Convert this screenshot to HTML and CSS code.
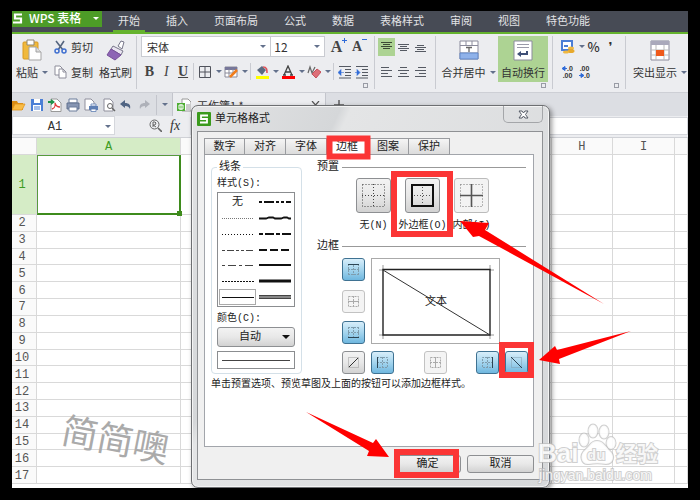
FILE: index.html
```html
<!DOCTYPE html>
<html lang="zh-CN">
<head>
<meta charset="utf-8">
<title>WPS 表格</title>
<link rel="stylesheet" href="styles.css">
</head>
<body>
<div class="app">
  <header class="menu">
    <button class="brand"><svg width="10" height="11" viewBox="0 0 10 11"><path d="M9 1.5H2v4h6v4H0" fill="none" stroke="#fff" stroke-width="2.2"/></svg><span>WPS 表格</span><i class="caret light"></i></button>
    <nav class="menu-tabs">
      <a href="#" class="current">开始</a><a href="#">插入</a><a href="#">页面布局</a><a href="#">公式</a><a href="#">数据</a><a href="#">表格样式</a><a href="#">审阅</a><a href="#">视图</a><a href="#">特色功能</a>
    </nav>
  </header>

  <div class="ribbon">
    <div class="group clipboard">
      <button class="big"><svg width="20" height="22" viewBox="0 0 20 22"><rect x="1" y="3" width="15" height="17" rx="1" fill="#f0b93d" stroke="#d99a20"/><path d="M5 1h7v5H5z" fill="#fff" stroke="#8d8574"/><path d="M7 8h7l5 5v8H7z" fill="#fff" stroke="#a3a3a3"/><path d="M14 8v5h5" fill="#ddd" stroke="#a3a3a3"/></svg><span>粘贴<i class="caret"></i></span></button>
      <div class="stack">
        <button class="line"><svg width="13" height="14" viewBox="0 0 13 14"><path d="M2 1l7 9M10 1L4 10" stroke="#55657f" stroke-width="1.6"/><circle cx="3" cy="11" r="2" fill="none" stroke="#3f6fd0" stroke-width="1.5"/><circle cx="10" cy="11" r="2" fill="none" stroke="#3f6fd0" stroke-width="1.5"/></svg>剪切</button>
        <button class="line"><svg width="13" height="14" viewBox="0 0 13 14"><path d="M1 1h5l2 2v7H1z" fill="#fff" stroke="#8d8d9a"/><path d="M5 4h4l3 3v6H5z" fill="#fff" stroke="#8d8d9a"/><path d="M9 4v3h3" fill="none" stroke="#8d8d9a"/></svg>复制</button>
      </div>
      <button class="big"><svg width="20" height="22" viewBox="0 0 20 22"><path d="M12 7l3-5 3 1-2 7z" fill="#fff" stroke="#77778a"/><path d="M7 7l10 5-2 4L5 10z" fill="#e9e4f1" stroke="#77778a"/><path d="M5 10l10 6-6 5-8-5z" fill="#8d65b5" stroke="#775099"/></svg><span>格式刷</span></button>
    </div>

    <div class="group fonts">
      <div class="row">
        <div class="field face"><select aria-label="字体"><option>宋体</option></select><i class="caret"></i></div>
        <div class="field size"><select aria-label="字号"><option>12</option></select><i class="caret"></i></div>
        <button class="tool wide grow" aria-label="增大字号">A<svg width="5" height="5" viewBox="0 0 5 5"><path d="M0 2.5h5M2.5 0v5" stroke="#2f6bd8"/></svg></button>
        <button class="tool wide shrink" aria-label="减小字号">A<svg width="5" height="5" viewBox="0 0 5 5"><path d="M0 1.5h5" stroke="#2f6bd8"/></svg></button>
      </div>
      <div class="row">
        <button class="tool letter"><b>B</b></button><button class="tool letter"><em>I</em></button><button class="tool letter"><u>U</u></button>
        <i class="split"></i>
        <button class="tool drop" aria-label="边框"><svg width="14" height="14" viewBox="0 0 14 14"><path d="M1.500 1.500h11v11h-11zM7 1v12M1 7h12" fill="none" stroke="#50535c"/></svg><i class="caret"></i></button>
        <button class="tool drop" aria-label="绘图边框"><svg width="14" height="14" viewBox="0 0 14 14"><path d="M1 2h12v10H1z" fill="#fff" stroke="#8a8a99"/><path d="M1 2h12v3H1z" fill="#77779a"/><path d="M1 8h8M5 4v8M9 4v4" stroke="#8a8a99"/><path d="M6 12l7-7" stroke="#f17d1b" stroke-width="2.500"/></svg><i class="caret"></i></button>
        <i class="split"></i>
        <button class="tool drop" aria-label="填充颜色"><svg width="14" height="14" viewBox="0 0 14 14"><path d="M2 5l5-4 4 4-4 5z" fill="#5c6b80"/><path d="M8 2c4 0 4 3 4 6" fill="none" stroke="#e0555b" stroke-width="1.600"/><path d="M1 12.500h13" stroke="#ff0" stroke-width="3"/></svg><i class="caret"></i></button>
        <button class="tool drop" aria-label="字体颜色"><svg width="14" height="14" viewBox="0 0 14 14"><path d="M3 10l4-9 4 9M4.500 7h5M2 10h3M9 10h3" fill="none" stroke="#444" stroke-width="1.300"/><path d="M1 12.500h13" stroke="red" stroke-width="3"/></svg><i class="caret"></i></button>
        <button class="tool drop" aria-label="清除"><svg width="14" height="14" viewBox="0 0 14 14"><path d="M1 8l2-6 2 6 3-6" fill="none" stroke="#666" stroke-width="1.200"/><path d="M5 9l5-5 4 3-5 6z" fill="#dd6f78" stroke="#c5505b"/></svg><i class="caret"></i></button>
        <i class="split"></i>
        <button class="tool" aria-label="减少缩进"><svg width="13" height="14" viewBox="0 0 13 14"><path d="M1 1.500h12M7 4.500h6M7 7.500h6M7 10.500h6M1 13h12" stroke="#555a63"/><path d="M0 7.500l3-3v6zM3 7.500h3" fill="#2f6bd8" stroke="#2f6bd8" stroke-width=".6"/></svg></button>
        <button class="tool" aria-label="增加缩进"><svg width="13" height="14" viewBox="0 0 13 14"><path d="M1 1.500h12M7 4.500h6M7 7.500h6M7 10.500h6M1 13h12" stroke="#555a63"/><path d="M5 7.500l-3-3v6zM0 7.500h3" fill="#2f6bd8" stroke="#2f6bd8" stroke-width=".6"/></svg></button>
      </div>
      <i class="corner"></i>
    </div>

    <div class="group align">
      <div class="row">
        <button class="tool on" aria-label="顶端对齐"><svg width="11" height="12" viewBox="0 0 11 12"><path d="M0 1.500h11M2 3.500h7M0 5.500h11M2 7.500h7" stroke="#3c4a35"/></svg></button>
        <button class="tool" aria-label="垂直居中"><svg width="11" height="12" viewBox="0 0 11 12"><path d="M0 3.500h11M2 5.500h7M0 7.500h11M2 9.500h7" stroke="#555a63"/></svg></button>
        <button class="tool" aria-label="底端对齐"><svg width="11" height="12" viewBox="0 0 11 12"><path d="M2 4.500h7M0 6.500h11M2 8.500h7M0 10.500h11" stroke="#555a63"/></svg></button>
      </div>
      <div class="row">
        <button class="tool" aria-label="左对齐"><svg width="11" height="12" viewBox="0 0 11 12"><path d="M0 1.500h8M0 4.500h11M0 7.500h7M0 10.500h11" stroke="#555a63"/></svg></button>
        <button class="tool" aria-label="水平居中"><svg width="11" height="12" viewBox="0 0 11 12"><path d="M2 1.500h7M0 4.500h11M2 7.500h7M0 10.500h11" stroke="#555a63"/></svg></button>
        <button class="tool" aria-label="右对齐"><svg width="11" height="12" viewBox="0 0 11 12"><path d="M3 1.500h8M0 4.500h11M4 7.500h7M0 10.500h11" stroke="#555a63"/></svg></button>
      </div>
    </div>

    <div class="group merge">
      <button class="big mid"><svg width="20" height="22" viewBox="0 0 20 22"><path d="M1 2h18v18H1z" fill="#fff" stroke="#8b8b9c"/><path d="M1 6.500h18M7 2v4M13 2v4M1 14h18" stroke="#8b8b9c"/><path d="M1 14h18v6H1z" fill="#8fb2ea" stroke="#6389c9"/><path d="M7 8.500h6M10 8v5" stroke="#666" stroke-width="1.300"/></svg><span>合并居中<i class="caret"></i></span></button>
      <button class="big on"><svg width="20" height="22" viewBox="0 0 20 22"><path d="M1 2h18v19H1z" fill="#fff" stroke="#8b8b9c"/><path d="M4 5.500h12M4 8.500h12" stroke="#9a9aa8"/><path d="M14 12v3H7" fill="none" stroke="#3f4f77" stroke-width="2"/><path d="M4 15l4-3v6z" fill="#3f4f77"/></svg><span>自动换行</span></button>
      <i class="corner"></i>
    </div>

    <div class="group number">
      <div class="row">
        <button class="tool drop" aria-label="货币"><svg width="14" height="14" viewBox="0 0 14 14"><path d="M1 1h10v9H1z" fill="#fff" stroke="#4b7ed6" stroke-width="2"/><path d="M3 6h4" stroke="#4b7ed6" stroke-width="2"/><ellipse cx="10" cy="8" rx="3" ry="1.600" fill="#f0b840"/><ellipse cx="10" cy="11" rx="3.500" ry="2" fill="#e7a92c"/><ellipse cx="5" cy="12" rx="3" ry="1.600" fill="#f0b840"/></svg><i class="caret"></i></button>
        <button class="tool sign">%</button><button class="tool comma">❜</button>
      </div>
      <div class="row">
        <button class="tool places" aria-label="增加小数位数"><span><svg width="5" height="5" viewBox="0 0 5 5"><path d="M0 2.500l3-2v4zM2 2.500h3" fill="#2f6bd8" stroke="#2f6bd8"/></svg>.0</span><span>.00</span></button>
        <button class="tool places" aria-label="减少小数位数"><span>.00</span><span><svg width="5" height="5" viewBox="0 0 5 5"><path d="M5 2.500l-3-2v4zM0 2.500h3" fill="#2f6bd8" stroke="#2f6bd8"/></svg>.0</span></button>
      </div>
      <i class="corner"></i>
    </div>

    <div class="group show">
      <button class="big mid"><svg width="20" height="22" viewBox="0 0 20 22"><path d="M1 2h18v19H1z" fill="#fff" stroke="#8b8b9c"/><path d="M1 2h18v4H1z" fill="#aaa9bb"/><path d="M1 11h18M1 16h18M6 6v15M14 6v15" stroke="#bbb"/><path d="M6 11h8v6H6z" fill="#ef5a1c"/></svg><span>突出显示<i class="caret"></i></span></button>
    </div>
  </div>

  <div class="docbar">
    <div class="quick">
      <button aria-label="打开"><svg width="14" height="14" viewBox="0 0 14 14"><path d="M0 12V3h5l1 2h5v7z" fill="#d98c15"/><path d="M0 12l3-6h10l-3 6z" fill="#f9bc45" stroke="#e0951d" stroke-width=".8"/></svg></button>
      <button aria-label="保存"><svg width="14" height="14" viewBox="0 0 14 14"><path d="M1 1h12v12H1z" fill="#4b7fd6"/><path d="M4 1h6v4H4zM3 7h8v6H3z" fill="#fff"/><path d="M4 9h6M4 11h6" stroke="#4b7fd6"/></svg></button>
      <button aria-label="输出为PDF"><svg width="14" height="14" viewBox="0 0 14 14"><path d="M3 1h6l4 4v8.500H3z" fill="#fff" stroke="#999"/><path d="M4 11c4-1 3-6 3-6s1 4 5 4" fill="none" stroke="#e03b3b" stroke-width="1.300"/><path d="M0 3h3V1l4 3-4 3V5H0z" fill="#1f9148"/></svg></button>
      <button aria-label="打印"><svg width="14" height="14" viewBox="0 0 14 14"><path d="M3 1h8v4H3z" fill="#fff" stroke="#6b7c9b"/><path d="M1 5h12v6H1z" fill="#8796b3" stroke="#60708e"/><path d="M3 9h8v4H3z" fill="#fff" stroke="#6b7c9b"/></svg></button>
      <button aria-label="直接打印"><svg width="14" height="14" viewBox="0 0 14 14"><path d="M1 1h6l3 3v8H1z" fill="#fff" stroke="#8f8f9c"/><path d="M5 8h9v4H5z" fill="#5e7fb4"/><path d="M7 6h5v2H7zM7 11h5v2.500H7z" fill="#fff" stroke="#5e7fb4" stroke-width=".8"/></svg></button>
      <button aria-label="打印预览"><svg width="14" height="14" viewBox="0 0 14 14"><path d="M2 1h6l3 3v9H2z" fill="#fff" stroke="#8f8f9c"/><circle cx="8" cy="8" r="2.500" fill="#fff" stroke="#666"/><path d="M10 10l3 3" stroke="#666" stroke-width="1.500"/></svg></button>
      <button aria-label="撤销"><svg width="12" height="12" viewBox="0 0 12 12"><path d="M0 5l5-4v3c4 0 6 2 5 6-1-2-2-3-5-3v2z" fill="#506483"/></svg></button>
      <button aria-label="恢复"><svg width="12" height="12" viewBox="0 0 12 12"><path d="M12 5L7 1v3C3 4 1 6 2 10c1-2 2-3 5-3v2z" fill="#aeb1b9"/></svg></button>
      <button class="more" aria-label="更多"><i class="caret"></i></button>
    </div>
    <div class="doc"><svg width="14" height="14" viewBox="0 0 14 14"><path d="M5 1h6l3 3v9H5z" fill="#fff" stroke="#999"/><path d="M0 5h8v8H0z" fill="#4fae35"/><path d="M2 7h4v4H2zM4 6v6" fill="none" stroke="#fff"/><path d="M10 6v6M12 6v6" stroke="#999"/></svg><span>工作簿1 *</span><button aria-label="关闭"><svg width="9" height="8" viewBox="0 0 9 8"><path d="M1 0l7 8M8 0L1 8" stroke="#555" stroke-width="1.200"/></svg></button></div>
    <button class="add" aria-label="新建"><svg width="10" height="10" viewBox="0 0 10 10"><path d="M0 5h10M5 0v10" stroke="#555" stroke-width="1.400"/></svg></button>
  </div>

  <div class="formula">
    <div class="namebox"><input type="text" value="A1" aria-label="名称框"><i class="caret"></i></div>
    <button aria-label="查找"><svg width="13" height="13" viewBox="0 0 13 13"><circle cx="5.500" cy="5.500" r="4.500" fill="none" stroke="#666"/><path d="M9 9l4 4" stroke="#666" stroke-width="1.600"/><path d="M4 8V3h2l1 1-1 2H4l3 2" fill="none" stroke="#666"/></svg></button>
    <button class="fx"><em>fx</em></button>
    <input class="formula-input" type="text" aria-label="编辑栏">
  </div>

  <div class="sheet">
    <table>
      <colgroup><col class="c-num"><col class="c-a"><col><col><col><col><col><col><col><col><col class="c-last"></colgroup>
      <thead><tr><th></th><th class="picked">A</th><th></th><th></th><th></th><th></th><th></th><th></th><th>H</th><th>I</th><th></th></tr></thead>
      <tbody>
        <tr class="tall"><th class="picked">1</th><td class="active"><i></i></td><td></td><td></td><td></td><td></td><td></td><td></td><td></td><td></td><td></td></tr>
        <tr><th>2</th><td></td><td></td><td></td><td></td><td></td><td></td><td></td><td></td><td></td><td></td></tr>
        <tr><th>3</th><td></td><td></td><td></td><td></td><td></td><td></td><td></td><td></td><td></td><td></td></tr>
        <tr><th>4</th><td></td><td></td><td></td><td></td><td></td><td></td><td></td><td></td><td></td><td></td></tr>
        <tr><th>5</th><td></td><td></td><td></td><td></td><td></td><td></td><td></td><td></td><td></td><td></td></tr>
        <tr><th>6</th><td></td><td></td><td></td><td></td><td></td><td></td><td></td><td></td><td></td><td></td></tr>
        <tr><th>7</th><td></td><td></td><td></td><td></td><td></td><td></td><td></td><td></td><td></td><td></td></tr>
        <tr><th>8</th><td></td><td></td><td></td><td></td><td></td><td></td><td></td><td></td><td></td><td></td></tr>
        <tr><th>9</th><td></td><td></td><td></td><td></td><td></td><td></td><td></td><td></td><td></td><td></td></tr>
        <tr><th>10</th><td></td><td></td><td></td><td></td><td></td><td></td><td></td><td></td><td></td><td></td></tr>
        <tr><th>11</th><td></td><td></td><td></td><td></td><td></td><td></td><td></td><td></td><td></td><td></td></tr>
        <tr><th>12</th><td></td><td></td><td></td><td></td><td></td><td></td><td></td><td></td><td></td><td></td></tr>
        <tr><th>13</th><td></td><td></td><td></td><td></td><td></td><td></td><td></td><td></td><td></td><td></td></tr>
        <tr><th>14</th><td></td><td></td><td></td><td></td><td></td><td></td><td></td><td></td><td></td><td></td></tr>
        <tr><th>15</th><td></td><td></td><td></td><td></td><td></td><td></td><td></td><td></td><td></td><td></td></tr>
        <tr><th>16</th><td></td><td></td><td></td><td></td><td></td><td></td><td></td><td></td><td></td><td></td></tr>
        <tr><th>17</th><td></td><td></td><td></td><td></td><td></td><td></td><td></td><td></td><td></td><td></td></tr>
      </tbody>
    </table>
  </div>

  <div class="signature">简简噢</div>

  <section class="dialog" role="dialog" aria-label="单元格格式">
    <div class="titlebar">
      <svg width="14" height="14" viewBox="0 0 14 14"><rect width="14" height="14" rx="1" fill="#3a9a1c"/><path d="M11 3.500H4v3.500h6v3.500H3" fill="none" stroke="#fff" stroke-width="1.800"/></svg>
      <span>单元格格式</span>
      <button class="close" aria-label="关闭"><svg width="11" height="9" viewBox="0 0 11 9"><path d="M1 1h3l1.500 2L7 1h3L7.500 4.500 10 8H7L5.500 6 4 8H1l2.500-3.500z" fill="#fff" stroke="#555b66"/></svg></button>
    </div>
    <div class="client">
      <div class="tabs" role="tablist"><button role="tab">数字</button><button role="tab">对齐</button><button role="tab">字体</button><button role="tab" class="current">边框</button><button role="tab">图案</button><button role="tab">保护</button></div>
      <div class="panel">
        <div class="columns">
          <fieldset class="lines">
            <legend>线条</legend>
            <div class="caption">样式(S):</div>
            <div class="styles" role="listbox" aria-label="样式">
              <div class="none">无</div><div><svg viewBox="0 0 32 4"><path d="M0 2h32" stroke-width="2" stroke-dasharray="3 2 10 2 3 2"/></svg></div>
              <div><svg viewBox="0 0 32 4"><path d="M0 2.500h32" stroke="#777" stroke-dasharray="1 1"/></svg></div><div><svg viewBox="0 0 32 4"><path d="M0 2.500h7l3-1h4l2 1h6l3-1h3l2 1h2" fill="none" stroke-width="1.800"/></svg></div>
              <div><svg viewBox="0 0 32 4"><path d="M0 2.500h32" stroke-dasharray="1 2"/></svg></div><div><svg viewBox="0 0 32 4"><path d="M0 2h32" stroke-width="2" stroke-dasharray="4 2 9 2"/></svg></div>
              <div><svg viewBox="0 0 32 4"><path d="M0 2.500h32" stroke="#444" stroke-dasharray="3 2 7 2 3 2"/></svg></div><div><svg viewBox="0 0 32 4"><path d="M0 2h32" stroke-width="2" stroke-dasharray="8 3"/></svg></div>
              <div><svg viewBox="0 0 32 4"><path d="M0 2.500h32" stroke="#444" stroke-dasharray="3 3 8 3"/></svg></div><div><svg viewBox="0 0 32 4"><path d="M0 2h32" stroke-width="2"/></svg></div>
              <div><svg viewBox="0 0 32 4"><path d="M0 2.500h32" stroke-dasharray="2 1"/></svg></div><div><svg viewBox="0 0 32 4"><path d="M0 2h32" stroke-width="3"/></svg></div>
              <div class="chosen"><svg viewBox="0 0 32 4"><path d="M0 2.500h32"/></svg></div><div><svg viewBox="0 0 32 4"><path d="M0 .5h32M0 3.500h32" stroke="#444"/><path d="M0 2h32" stroke="#888" stroke-width="2"/></svg></div>
            </div>
            <label class="caption" for="line-color">颜色(C):</label>
            <div class="color"><select id="line-color"><option>自动</option></select><i class="caret dark"></i></div>
            <div class="sample"></div>
          </fieldset>
          <div class="settings">
            <h2>预置</h2>
            <div class="presets">
              <div><button aria-label="无"><svg width="25" height="25" viewBox="0 0 25 25"><path d="M1.500 1.500h22v22h-22zM12.500 1v23M1 12.500h23" fill="none" stroke="#444" stroke-dasharray="1 2"/></svg></button><span>无(N)</span></div>
              <div><button aria-label="外边框"><svg width="25" height="25" viewBox="0 0 25 25"><path d="M12.500 4v18M4 12.500h18" stroke="#555" stroke-dasharray="1 2"/><path d="M2 2h21v21H2z" fill="none" stroke="#111" stroke-width="2"/></svg></button><span>外边框(O)</span></div>
              <div><button class="soft" aria-label="内部"><svg width="25" height="25" viewBox="0 0 25 25"><path d="M1.500 1.500h22v22h-22z" fill="none" stroke="#777" stroke-dasharray="1 2"/><path d="M12.500 1v23M1 12.500h23" stroke="#555" stroke-width="1.600"/></svg></button><span>内部(I)</span></div>
            </div>
            <h2>边框</h2>
            <div class="edges">
              <div class="side">
                <button class="blue" aria-label="上边框"><svg viewBox="0 0 13 13"><path d="M1.500 1v11M11.500 1v11M1 11.500h11M6.500 2v10M1 6.500h11" stroke-dasharray="2 1"/><path d="M1 1.500h11" class="hard"/></svg></button>
                <button class="off" aria-label="内部横线"><svg viewBox="0 0 13 13"><path d="M1.500 1.500h10v10h-10zM6.500 1v11" stroke-dasharray="2 1"/><path d="M1 6.500h11"/></svg></button>
                <button class="blue" aria-label="下边框"><svg viewBox="0 0 13 13"><path d="M1.500 1v11M11.500 1v11M1 1.500h11M6.500 1v10M1 6.500h11" stroke-dasharray="2 1"/><path d="M1 11.500h11" class="hard"/></svg></button>
              </div>
              <div class="preview"><span>文本</span><svg viewBox="0 0 128 86" aria-hidden="true"><path d="M11 6v5M7 11h4M118 6v5M118 11h4M11 76v4M7 76h4M118 76v4M118 76h4" stroke="#999" fill="none"/><path d="M11 10.500h107v65.500H11z" fill="none" stroke="#222" stroke-width="1.400"/><path d="M11 11l107 65" stroke="#333"/></svg></div>
              <button class="corner-up" aria-label="斜线"><svg viewBox="0 0 13 13"><path d="M1.500 1.500h10v10h-10z" stroke="#999" stroke-dasharray="1 1"/><path d="M2 11l9-9" class="hard"/></svg></button>
              <div class="bottom">
                <button class="blue" aria-label="左边框"><svg viewBox="0 0 13 13"><path d="M1 1.500h10.500v10H1M6.500 1v11M1 6.500h11" stroke-dasharray="2 1"/><path d="M1.500 1v11" class="hard"/></svg></button>
                <button class="off" aria-label="内部竖线"><svg viewBox="0 0 13 13"><path d="M1.500 1.500h10v10h-10zM1 6.500h11" stroke-dasharray="2 1"/><path d="M6.500 1v11"/></svg></button>
                <button class="blue" aria-label="右边框"><svg viewBox="0 0 13 13"><path d="M12 1.500H1.500v10H12M6.500 1v11M1 6.500h11" stroke-dasharray="2 1"/><path d="M11.500 1v11" class="hard"/></svg></button>
              </div>
              <button class="blue" aria-label="反斜线"><svg viewBox="0 0 13 13"><path d="M1.500 1.500h10v10h-10z" stroke-dasharray="1 1"/><path d="M1 1l11 11" class="hard"/></svg></button>
            </div>
          </div>
        </div>
        <p class="hint">单击预置选项、预览草图及上面的按钮可以添加边框样式。</p>
      </div>
      <div class="actions"><button>确定</button><button>取消</button></div>
    </div>
  </section>

  <svg class="marks" width="676" height="477" viewBox="12 11 676 477" aria-hidden="true">
    <g fill="none" stroke="#fb3535" stroke-width="6">
      <rect x="329.500" y="138.500" width="38" height="18"/>
      <rect x="394" y="174" width="56" height="60"/>
      <rect x="502" y="345" width="29" height="30"/>
      <rect x="397" y="452" width="59" height="23"/>
    </g>
    <g fill="red">
      <path d="M460 221l29 2-4 7 119 74-125-68-6 1z"/>
      <path d="M539 360l16-14 2 4 74-19-72 28 1 5z"/>
      <path d="M306 412l67 31 3-4 13 18-22-1 2-5z"/>
    </g>
    <g class="stamp">
      <text x="538" y="462" class="stamp-name">Bai</text>
      <ellipse cx="584" cy="440" rx="4.500" ry="6.500"/><ellipse cx="593" cy="431" rx="4.500" ry="6.500"/><ellipse cx="604" cy="432" rx="4.500" ry="6.500"/><ellipse cx="611" cy="443" rx="4.500" ry="6"/>
      <path d="M597 441c-6 0-7 5-12 9-6 5-4 15 4 14 5-1 11-1 17 0 8 0 9-9 4-13-5-5-7-10-13-10z"/>
      <text x="587" y="460" class="stamp-du">du</text>
      <text x="616" y="461" class="stamp-cn">经验</text>
      <text x="539" y="480" class="stamp-url">jingyan.baidu.com</text>
    </g>
  </svg>
</div>
</body>
</html>
```
FILE: styles.css
```css
* { box-sizing: border-box; }

html, body { height: 100%; }

body {
  margin: 0;
  padding: 11px 12px 12px;
  background: #000;
  color: #333;
  font: 11px/16px "Noto Sans CJK SC", sans-serif;
}

button, input, select {
  margin: 0;
  padding: 0;
  border: 0;
  background: none;
  color: inherit;
  font: inherit;
  appearance: none;
}

svg { display: block; flex: none; }

.app {
  position: relative;
  display: flex;
  flex-direction: column;
  height: 100%;
  overflow: hidden;
  background: #fff;
}

.caret {
  flex: none;
  border: 3px solid transparent;
  border-top-color: #63718c;
  border-bottom: 0;
}
.caret.light { border-top-color: #fff; }
.caret.dark { border-width: 4px 4px 0; border-top-color: #111; }

/* Menu */
.menu {
  display: flex;
  flex: none;
  height: 23px;
  background: #474b55;
  border-bottom: 2px solid #65b32e;
}
.brand {
  display: flex;
  align-items: center;
  gap: 6px;
  width: 90px;
  height: 16px;
  padding: 0 3px 2px 1px;
  background: #4d9c27;
  color: #fff;
  font-size: 12px;
  font-weight: 500;
}
.brand .caret { margin-left: auto; }
.menu-tabs { display: flex; margin-left: 3px; }
.menu-tabs a {
  display: flex;
  align-items: center;
  padding: 0 13px 4px;
  color: #e3e3e6;
  text-decoration: none;
}
.menu-tabs .current {
  background: linear-gradient(#65b32e, #65b32e) center bottom / 32px 2px no-repeat;
}

/* Ribbon */
.ribbon {
  display: flex;
  flex: none;
  height: 59px;
  padding-top: 2px;
  background: #ecedf0;
  border-bottom: 1px solid #cdcfd5;
}
.group {
  position: relative;
  flex: none;
  height: 53px;
  padding: 0 4px;
  border-right: 1px solid #c9cbd1;
}
.group.show { border: 0; padding: 0 0 0 7px; }
.clipboard { display: flex; justify-content: space-between; width: 125px; }
.fonts { width: 238px; }
.align { width: 61px; padding: 0 3px; }
.merge { display: flex; width: 117px; }
.merge .mid { width: 57px; }
.number { width: 73px; padding: 0 6px; }

.row { display: flex; align-items: center; height: 21px; }
.row + .row { margin-top: 4px; }
.stack { display: flex; flex-direction: column; gap: 4px; }
.line { display: flex; align-items: center; gap: 4px; height: 21px; }

.big {
  display: flex;
  flex-direction: column;
  align-items: center;
  gap: 4px;
  height: 46px;
  padding-top: 3px;
  line-height: 16px;
  white-space: nowrap;
}
.big span { display: flex; align-items: center; gap: 4px; line-height: 14px; }
.big.on { width: 50px; margin-left: 1px; background: #add393; }

.tool { display: flex; align-items: center; justify-content: center; width: 17px; height: 18px; }
.tool.on { background: #add393; }
.tool.drop { width: 26px; justify-content: flex-start; gap: 4px; padding-left: 2px; }
.tool.wide { width: 21px; align-items: flex-start; color: #444; font: 16px/18px "Liberation Serif", serif; font-weight: bold; }
.tool.shrink { font-size: 14px; }
.grow { margin-left: 4px; }
.letter { color: #444; font: 14px/18px "Liberation Serif", serif; font-weight: bold; }
.letter em { font-weight: normal; }
.split { width: 1px; height: 17px; margin: 0 2px; background: #c9cbd1; }
.sign { width: 18px; font-size: 13px; font-weight: 500; }
.comma { width: 18px; font: 12px/16px "DejaVu Sans", sans-serif; }
.places {
  flex-direction: column;
  font: 7px/7px "Liberation Sans", sans-serif;
  font-weight: bold;
}
.places span { display: flex; align-items: center; }

.corner {
  position: absolute;
  right: 6px;
  bottom: 1px;
  width: 5px;
  height: 5px;
  border: 1px solid #999ca5;
}

.field {
  display: flex;
  align-items: center;
  height: 21px;
  padding: 0 4px 0 5px;
  background: #fff;
  border: 1px solid #c9cbd1;
}
.field select { flex: 1; min-width: 0; }
.face { width: 132px; }
.size { width: 54px; padding-left: 3px; border-left: 0; }
.size select { font-size: 12px; }

/* Quick access and document tabs */
.docbar { display: flex; flex: none; height: 23px; background: #dcdee3; }
.quick { display: flex; align-items: center; width: 161px; border-right: 1px solid #c3c5cc; }
.quick button { display: flex; align-items: center; width: 18px; height: 20px; flex: none; }
.quick .more { width: 16px; padding-left: 5px; border-left: 1px solid #c3c5cc; }
.doc {
  display: flex;
  align-items: center;
  gap: 6px;
  width: 153px;
  padding: 0 5px 0 4px;
  background: #ecedf0;
  border-right: 1px solid #c3c5cc;
}
.doc button { margin-left: auto; }
.add { padding-left: 8px; }

/* Formula bar */
.formula {
  display: flex;
  align-items: center;
  flex: none;
  height: 22px;
  padding-bottom: 2px;
  background: #ecedf0;
  border-bottom: 1px solid #cfd1d6;
}
.namebox {
  display: flex;
  align-items: center;
  width: 103px;
  height: 19px;
  padding: 2px 3px 0 0;
  margin-right: 34px;
  background: #fff;
  border: 1px solid #d5d7dc;
}
.namebox input {
  flex: 1;
  min-width: 0;
  padding-right: 8px;
  text-align: center;
  font: 12px/16px "Liberation Mono", monospace;
}
.fx { width: 20px; margin-left: 8px; text-align: left; font: 14px/16px "Liberation Serif", serif; }
.formula-input { flex: 1; height: 18px; background: #fff; border: 1px solid #d5d7dc; }

/* Sheet */
.sheet { flex: 1; min-height: 0; padding-bottom: 4px; }
.sheet table { width: 100%; height: 100%; table-layout: fixed; border-spacing: 0; }
.c-num { width: 25px; }
.c-a { width: 144px; }
.c-last { width: 13px; }
.sheet th, .sheet td {
  padding: 0;
  border-right: 1px solid #d9d9d9;
  border-bottom: 1px solid #d9d9d9;
}
.sheet th {
  background: #fafafa;
  color: #555;
  font: 12px/13px "Liberation Mono", monospace;
}
.sheet thead th { padding-top: 2px; }
.sheet tbody th { padding: 2px 4px 0 0; }
.sheet thead tr { height: 17px; }
.sheet .tall { height: 60px; }
.sheet .picked { background: #d5ecc6; color: #3d9c22; }
.sheet .active {
  position: relative;
  border: 1px solid #569c3c;
  border-right: 2px solid #3e8b1c;
  border-bottom: 2px solid #3e8b1c;
}
.active i {
  position: absolute;
  right: -3px;
  bottom: -3px;
  width: 5px;
  height: 5px;
  background: #3e8b1c;
}

.signature {
  position: absolute;
  left: 50px;
  top: 400px;
  color: #aaa;
  font-size: 36px;
  line-height: 52px;
  transform: rotate(11deg);
}

/* Dialog */
.dialog {
  position: absolute;
  left: 179px;
  top: 94px;
  width: 359px;
  padding: 0 6px 7px 5px;
  background: linear-gradient(115deg, #e3e4e5, #d5d7d9 28%, #e4e5e6 30%, #d6d8da);
  border: 1px solid #6d6f72;
  border-radius: 7px;
  box-shadow: inset 0 0 0 1px #f4f4f4, 2px 2px 5px #0006;
  color: #222;
  font: 10px/16px "Liberation Mono", "Noto Sans CJK SC", monospace;
}
.titlebar { display: flex; align-items: center; gap: 4px; height: 25px; color: #222; font-size: 11px; }
.close {
  display: flex;
  align-items: center;
  justify-content: center;
  align-self: flex-start;
  width: 40px;
  height: 17px;
  margin-left: auto;
  border: 1px solid #a4a6a9;
  border-top: 0;
  border-radius: 0 0 5px 5px;
}
.client { padding: 6px 8px 6px 6px; background: #f0f0f0; border: 1px solid #8f9194; }
.tabs { display: flex; height: 17px; font-size: 11px; }
.tabs button {
  width: 41px;
  background: linear-gradient(#f5f5f5, #dcdcdc);
  border: 1px solid #9a9ca0;
  border-left-width: 0;
}
.tabs button:first-child { border-left-width: 1px; }
.tabs .current { background: #fff; border-bottom-color: #fff; }
.panel {
  height: 293px;
  margin-top: -1px;
  padding: 4px 7px 0 6px;
  background: #fff;
  border: 1px solid #a2a5ab;
}
.columns { display: flex; gap: 15px; }
.lines {
  flex: none;
  width: 91px;
  margin: 0;
  padding: 1px 6px 4px 5px;
  border: 1px solid #d4e0e8;
  border-radius: 4px;
}
.lines legend { margin-left: 0; padding: 0 2px; font-size: 11px; }
.caption { display: block; }
label.caption { margin-top: 4px; }
.styles {
  display: grid;
  grid-template: repeat(7, 1fr) / 1fr 1fr;
  height: 115px;
  padding: 1px;
  border: 1px solid #8b8d90;
}
.styles div { display: flex; align-items: center; justify-content: center; }
.styles svg { width: 32px; height: 4px; stroke: #111; }
.styles .none { font-size: 11px; }
.styles .chosen { border: 1px solid #aaa; }
.color, .presets button, .edges button, .actions button {
  background: linear-gradient(#f3f3f3, #e8e8e8 50%, #d2d2d2);
  border: 1px solid #8d8f92;
  border-radius: 3px;
}
.color { display: flex; align-items: center; height: 20px; padding: 0 4px; }
.color select { flex: 1; min-width: 0; padding-right: 4px; text-align: center; text-align-last: center; font-size: 11px; }
.sample {
  height: 18px;
  margin-top: 4px;
  background: linear-gradient(#444, #444) center / 68px 1px no-repeat;
  border: 1px solid #8b8d90;
}
.settings { flex: 1; min-width: 0; }
.settings h2 {
  display: flex;
  align-items: center;
  gap: 3px;
  margin: 0;
  font-size: 11px;
  font-weight: normal;
}
.settings h2::after { content: ""; flex: 1; height: 1px; background: #999; }
.presets { display: flex; margin: 3px 0 4px 32px; }
.presets > div { display: flex; flex-direction: column; align-items: center; gap: 5px; width: 49px; white-space: nowrap; }
.presets button { display: flex; align-items: center; justify-content: center; width: 35px; height: 35px; }
.presets .soft { background: #f3f3f3; border-color: #bbb; }
.edges {
  display: grid;
  grid-template: 86px 23px / 23px 128px 23px;
  gap: 7px 6px;
  margin: 4px 0 0 25px;
}
.side { display: flex; flex-direction: column; justify-content: space-between; }
.bottom { display: flex; justify-content: space-between; grid-column: 2; }
.corner-up { grid-column: 1; }
.edges button { display: flex; align-items: center; justify-content: center; width: 23px; height: 23px; }
.edges button svg { width: 13px; height: 13px; fill: none; stroke: #666; }
.edges .hard { stroke: #333; }
.edges .blue { background: linear-gradient(#d8eefa, #a5d5ee 50%, #6fb7df); border-color: #3f7292; }
.edges .blue svg { stroke: #7f9dae; }
.edges .blue .hard { stroke: #2c4554; }
.edges .off { background: #f4f4f4; border-color: #c2c2c2; }
.edges .off svg { stroke: #aaa; }
.preview {
  display: grid;
  grid-column: 2 / 4;
  width: 129px;
  place-items: center;
  border: 1px solid #aaa;
  font-size: 11px;
}
.preview > * { grid-area: 1 / 1; }
.preview svg { width: 128px; height: 86px; }
.hint { margin: 3px 0 0; white-space: nowrap; }
.actions { display: flex; justify-content: flex-end; gap: 6px; margin-top: 8px; }
.actions button { width: 67px; height: 18px; line-height: 16px; font-size: 11px; }

/* Marks and stamp over the window */
.marks { position: absolute; left: 0; top: 0; }
.stamp { fill: #fff; fill-opacity: .85; stroke: #bbb; stroke-width: 2; stroke-opacity: .7; paint-order: stroke; }
.stamp text { font-family: "Liberation Sans", "Noto Sans CJK SC", sans-serif; }
.stamp-name { font-size: 26px; font-weight: bold; }
.stamp-du { font-size: 15px; font-weight: bold; }
.stamp-cn { font-size: 21px; font-weight: bold; }
.stamp-url { font-size: 14px; }
```
